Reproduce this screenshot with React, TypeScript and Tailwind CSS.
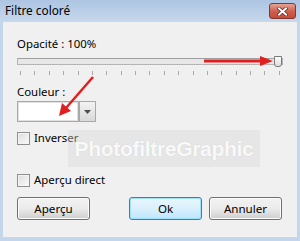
import React from 'react';

const ticks = Array.from({ length: 19 }, (_, i) => i);

function Checkbox({ label }: { label: string }) {
  return (
    <label className="flex items-center gap-[4px] h-[16px]">
      <span className="w-[13px] h-[13px] border border-[#8e8f8f] bg-gradient-to-br from-[#dcdcdc] to-[#fbfbfb] shadow-[inset_0_0_0_1px_#f4f4f4]" />
      <span className="text-[11.4px] leading-[16px] text-black">{label}</span>
    </label>
  );
}

function Btn({ label, focused }: { label: string; focused?: boolean }) {
  return (
    <button
      className={
        'w-[73px] h-[23px] rounded-[3px] text-[11.6px] leading-none text-black flex items-center justify-center ' +
        (focused
          ? 'border border-[#3c7fb1] bg-gradient-to-b from-[#eaf6fd] via-[#d9f0fc] to-[#bee6fd] shadow-[inset_0_0_0_1px_#9fe0fd]'
          : 'border border-[#707070] bg-gradient-to-b from-[#f2f2f2] via-[#ebebeb] to-[#cfcfcf] shadow-[inset_0_0_0_1px_#fcfcfc]')
      }
    >
      {label}
    </button>
  );
}

export default function App() {
  return (
    <div className="relative w-[300px] h-[241px] bg-[#c4d6eb] flex flex-col font-['Noto_Sans',sans-serif] overflow-hidden">
      {/* Title bar */}
      <div className="h-[22px] flex items-center justify-between pl-[5px] pr-[4px] bg-gradient-to-b from-[#adc5e2] to-[#c6d8ec]">
        <span className="text-[11.8px] text-black leading-none">Filtre coloré</span>
        <div className="w-[27px] h-[16px] rounded-[3px] border border-[#7a3a34] bg-gradient-to-b from-[#e5a395] via-[#d0604f] to-[#c54a37] flex items-center justify-center">
          <svg width="11" height="9" viewBox="0 0 11 9">
            <path d="M2 1.5 L9 7.5 M9 1.5 L2 7.5" stroke="#4a2a26" strokeWidth="3.4" strokeLinecap="square" />
            <path d="M2 1.5 L9 7.5 M9 1.5 L2 7.5" stroke="#ffffff" strokeWidth="2" strokeLinecap="square" />
          </svg>
        </div>
      </div>

      {/* Body */}
      <div className="flex-1 mx-[3px] mb-[4px] bg-[#f0f0f0] px-[14px] pt-[14px] flex flex-col">
        <div className="text-[11.4px] leading-[16px] text-black">Opacité : 100%</div>

        <div className="relative mt-[6px] h-[7px] border border-[#b5b5b5] border-t-[#a0a0a0] bg-[#e7e7e7]">
          <div className="absolute right-[0px] top-[-3px] w-[8px] h-[11px] rounded-b-[3px] border border-[#7a7a7a] bg-gradient-to-b from-[#fdfdfd] to-[#dcdcdc]" />
        </div>
        <div className="mt-[6px] h-[4px] flex justify-between px-[3px]">
          {ticks.map((t) => (
            <span key={t} className="w-px h-[4px] bg-[#a8a8a8]" />
          ))}
        </div>

        <div className="mt-[9px] text-[11.4px] leading-[16px] text-black">Couleur :</div>
        <div className="mt-[1px] flex h-[21px]">
          <div className="w-[62px] h-[21px] border border-[#a9a9a9] bg-white shadow-[inset_0_0_0_1px_#e2e2e2]" />
          <div className="w-[17px] h-[21px] border border-[#a9a9a9] bg-gradient-to-b from-[#f3f3f3] to-[#d9d9d9] flex items-center justify-center">
            <svg width="7" height="4" viewBox="0 0 7 4">
              <path d="M0 0 H7 L3.5 4 Z" fill="#4d4d4d" />
            </svg>
          </div>
        </div>

        <div className="mt-[8px]">
          <Checkbox label="Inverser" />
        </div>
        <div className="mt-[26px]">
          <Checkbox label="Aperçu direct" />
        </div>

        <div className="mt-[9px] flex">
          <Btn label="Aperçu" />
          <div className="ml-[39px]">
            <Btn label="Ok" focused />
          </div>
          <div className="ml-[7px]">
            <Btn label="Annuler" />
          </div>
        </div>
      </div>

      {/* Watermark */}
      <div className="absolute left-[68px] top-[130px] w-[192px] h-[37px] bg-[#d8d8d8]/40 flex items-center justify-center pointer-events-none">
        <span className="text-[21px] font-bold text-white/90 tracking-[-0.3px] font-['Liberation_Sans',sans-serif] [text-shadow:0_0_1px_#c4c4c4]">
          PhotofiltreGraphic
        </span>
      </div>

      {/* Red arrows */}
      <svg className="absolute left-0 top-0 pointer-events-none" width="300" height="241" viewBox="0 0 300 241">
        <path d="M204 61 L262 61" stroke="#e02020" strokeWidth="3" />
        <path d="M273 61 L260 56 L260 66 Z" fill="#e02020" />
        <path d="M93 77 L66 108" stroke="#e02020" strokeWidth="2.5" />
        <path d="M59 116 L62 103 L71 111 Z" fill="#e02020" />
      </svg>
    </div>
  );
}
